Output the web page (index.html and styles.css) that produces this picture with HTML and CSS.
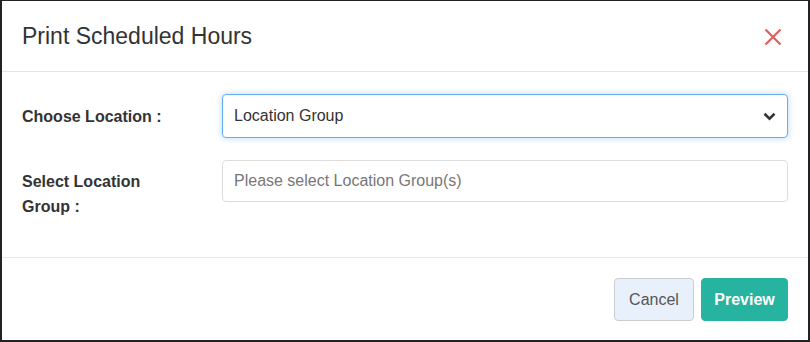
FILE: index.html
```html
<!DOCTYPE html>
<html>
<head>
<meta charset="utf-8">
<link rel="stylesheet" href="styles.css">
</head>
<body>
<div class="modal">
  <div class="modal-header">
    <h4 class="modal-title">Print Scheduled Hours</h4>
    <button class="close" aria-label="Close">
      <svg width="18" height="18" viewBox="0 0 18 18"><path d="M1.5 1.5 L16.5 16.5 M16.5 1.5 L1.5 16.5" stroke="#e35d5d" stroke-width="2.2" stroke-linecap="butt" fill="none"/></svg>
    </button>
  </div>
  <div class="modal-body">
    <div class="form-row">
      <label class="form-label">Choose Location :</label>
      <div class="control select focused">
        <span class="value">Location Group</span>
        <svg class="chev" width="13" height="9" viewBox="0 0 13 9"><path d="M1.5 1.8 L6.5 6.6 L11.5 1.8" stroke="#333" stroke-width="2.6" fill="none"/></svg>
      </div>
    </div>
    <div class="form-row second">
      <label class="form-label">Select Location<br>Group :</label>
      <div class="control input">
        <span class="placeholder">Please select Location Group(s)</span>
      </div>
    </div>
  </div>
  <div class="modal-footer">
    <button class="btn btn-cancel">Cancel</button>
    <button class="btn btn-preview">Preview</button>
  </div>
</div>
</body>
</html>
```
FILE: styles.css
```css
* { box-sizing: border-box; }
html, body { margin: 0; padding: 0; background: #fff; }
body { font-family: "Liberation Sans", Arial, sans-serif; color: #333; }

.modal {
  width: 810px;
  height: 342px;
  border-top: 1px solid #222;
  border-left: 2px solid #222;
  border-right: 2px solid #222;
  border-bottom: 2px solid #222;
  background: #fff;
  display: flex;
  flex-direction: column;
}

.modal-header {
  height: 71px;
  display: flex;
  align-items: center;
  justify-content: space-between;
  padding: 0 26px 0 20px;
  border-bottom: 1px solid #e5e5e5;
}
.modal-title {
  margin: 0;
  font-size: 23px;
  font-weight: normal;
  color: #333;
  padding-top: 0;
}
.close {
  border: 0;
  background: none;
  padding: 0;
  width: 18px;
  height: 18px;
  display: block;
  margin-top: 1px;
}
.close svg { display: block; }

.modal-body {
  height: 186px;
  padding: 22px 20px 0 20px;
  border-bottom: 1px solid #e5e5e5;
}
.form-row {
  display: flex;
  align-items: center;
}
.form-row.second {
  margin-top: 22px;
  align-items: flex-start;
}
.form-label {
  width: 200px;
  font-size: 16px;
  font-weight: bold;
  color: #333;
  line-height: 25px;
}
.second .form-label { padding-top: 9px; }

.control {
  flex: 1;
  display: flex;
  align-items: center;
  justify-content: space-between;
  border-radius: 4px;
  font-size: 16px;
  padding: 0 11px 0 11px;
}
.select {
  height: 44px;
  border: 1px solid #66afe9;
  box-shadow: 0 0 6px rgba(102, 175, 233, 0.5);
  color: #333;
}
.chev { display: block; }
.input {
  height: 42px;
  border: 1px solid #ddd;
}
.placeholder { color: #777; }

.modal-footer {
  flex: 1;
  display: flex;
  justify-content: flex-end;
  align-items: flex-start;
  gap: 7px;
  padding: 20px 20px 0 0;
}
.btn {
  height: 43px;
  border-radius: 4px;
  font-family: "Liberation Sans", Arial, sans-serif;
  font-size: 16px;
  padding: 0;
}
.btn-cancel {
  width: 80px;
  background: #e8f1fb;
  border: 1px solid #ccc;
  color: #555;
}
.btn-preview {
  width: 87px;
  background: #26b3a0;
  border: 1px solid #26b3a0;
  color: #fff;
  font-weight: bold;
}
```
